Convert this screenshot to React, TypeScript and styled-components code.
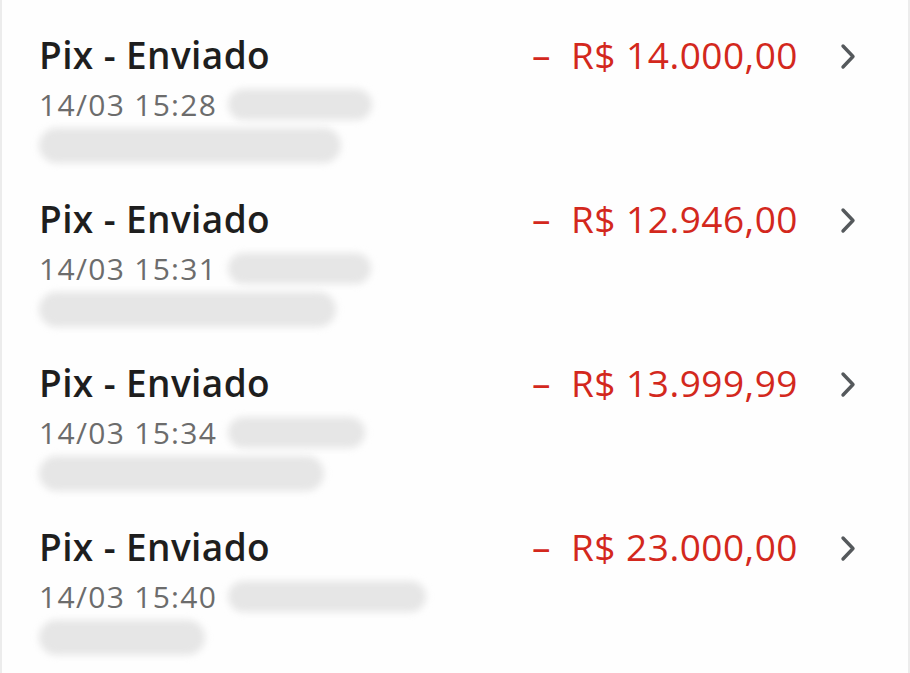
import styled, { createGlobalStyle } from 'styled-components'

const GlobalStyle = createGlobalStyle`
  html, body {
    margin: 0;
    padding: 0;
    background: #ffffff;
  }
  body {
    font-family: "Open Sans", "Noto Sans", "Liberation Sans", sans-serif;
  }
`

const Screen = styled.div`
  width: 910px;
  height: 673px;
  box-sizing: border-box;
  overflow: hidden;
  background: #fefefe;
  border-left: 2px solid #ececec;
  border-right: 2px solid #ececec;
`

const List = styled.ul`
  list-style: none;
  margin: 0;
  padding: 0;
`

const Row = styled.li`
  height: 164px;
  box-sizing: border-box;
  padding: 32px 52px 0 37px;
  display: grid;
  grid-template-columns: 1fr auto 58px;
  grid-template-rows: auto auto auto;
  align-items: start;
`

const Title = styled.div`
  grid-column: 1;
  grid-row: 1;
  font-size: 37px;
  line-height: 46px;
  font-weight: 600;
  color: #1e1e1e;
  letter-spacing: 0.4px;
`

const Meta = styled.div`
  grid-column: 1 / span 3;
  grid-row: 2;
  display: flex;
  align-items: center;
  gap: 11px;
  height: 40px;
  margin-top: 6px;
`

const DateText = styled.span`
  font-size: 30px;
  color: #6c6c6c;
  letter-spacing: 1.3px;
`

const Blur = styled.div<{ $w: number }>`
  width: ${p => p.$w}px;
  height: 31px;
  border-radius: 16px;
  background: #e6e6e6;
  filter: blur(3.5px);
`

const SecondLine = styled.div`
  grid-column: 1 / span 3;
  grid-row: 3;
  display: flex;
  margin-top: 3px;
`

const WideBlur = styled(Blur)`
  height: 35px;
  border-radius: 18px;
`

const Amount = styled.div`
  grid-column: 2;
  grid-row: 1;
  font-size: 37px;
  line-height: 46px;
  color: #d3281d;
  text-align: right;
  white-space: nowrap;
  letter-spacing: 0.5px;
`

const Sign = styled.span`
  margin-right: 20px;
`

const Chevron = styled.div`
  grid-column: 3;
  grid-row: 1;
  display: flex;
  justify-content: flex-end;
  padding-top: 11px;
`

const transactions = [
  { time: '14/03 15:28', value: 'R$ 14.000,00', blur: 144, line: 302 },
  { time: '14/03 15:31', value: 'R$ 12.946,00', blur: 143, line: 297 },
  { time: '14/03 15:34', value: 'R$ 13.999,99', blur: 137, line: 285 },
  { time: '14/03 15:40', value: 'R$ 23.000,00', blur: 198, line: 166 },
]

const App = () => {
  return (
    <>
      <GlobalStyle />
      <Screen>
        <List>
          {transactions.map(t => (
            <Row key={t.time}>
              <Title>Pix - Enviado</Title>
              <Amount>
                <Sign>–</Sign>
                {t.value}
              </Amount>
              <Chevron>
                <svg width="16" height="27" viewBox="0 0 16 27" fill="none">
                  <path d="M3 3 L13 13.5 L3 24" stroke="#55595c" strokeWidth="3.4" strokeLinecap="round" strokeLinejoin="round" />
                </svg>
              </Chevron>
              <Meta>
                <DateText>{t.time}</DateText>
                <Blur $w={t.blur} />
              </Meta>
              <SecondLine>
                <WideBlur $w={t.line} />
              </SecondLine>
            </Row>
          ))}
        </List>
      </Screen>
    </>
  )
}

export default App
